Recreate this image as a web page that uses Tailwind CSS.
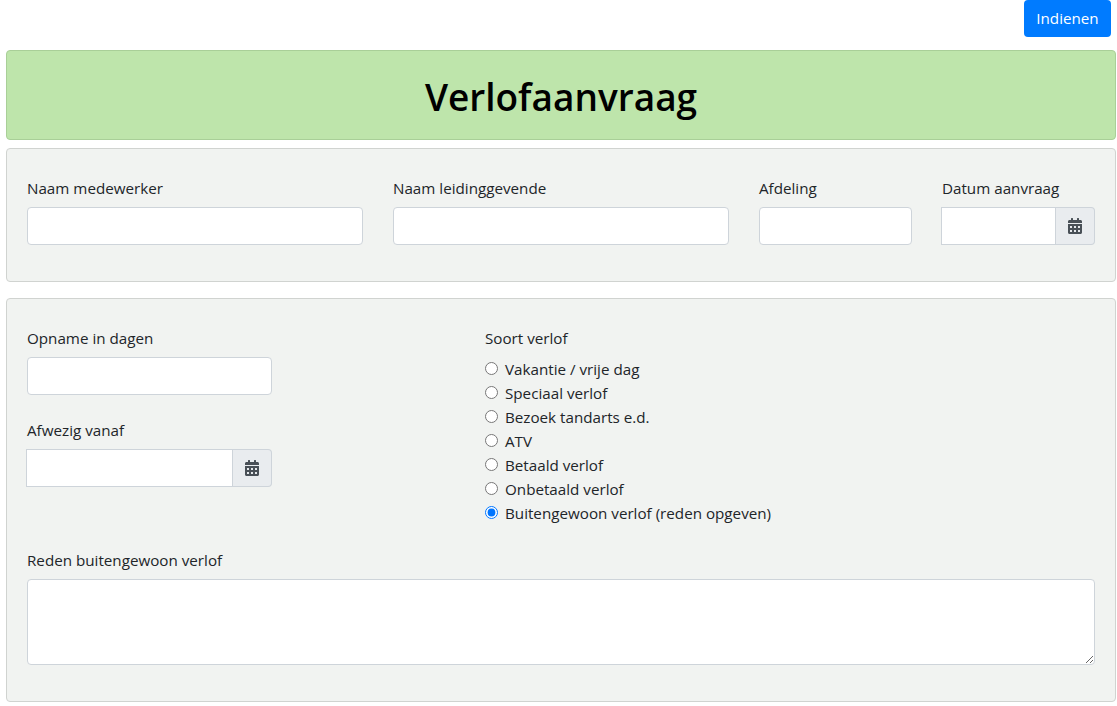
<!DOCTYPE html>
<html lang="nl"><head><meta charset="utf-8"><title>Verlofaanvraag</title>
<script src="https://cdn.jsdelivr.net/npm/@tailwindcss/browser@4"></script></head>
<body class="bg-white text-[#212529] font-['Open_Sans','Noto_Sans',sans-serif] text-[15.2px] leading-[24px] overflow-hidden h-[706px]">
<div class="flex justify-end pr-[6px] h-[37px] items-end"><button class="w-[87px] h-[37px] pb-[2px] bg-[#007bff] text-white rounded-[4px] text-[15.2px]">Indienen</button></div>
<div class="ml-[6px] mr-[1px] mt-[13px] h-[90px] bg-[#bee5ab] border border-[#a9cf98] rounded-[4px] flex items-center justify-center pt-[4px]"><h1 class="text-[37px] font-semibold text-black">Verlofaanvraag</h1></div>
<div class="ml-[6px] mr-[1px] mt-[8px] h-[134px] bg-[#f1f3f1] border border-[#d0d3d0] rounded-[4px] px-[20px] pt-[27px] flex">
<div class="w-[336px] shrink-0"><label class="block h-[31px]">Naam medewerker</label><input class="block w-full h-[38px] bg-white border border-[#ced4da] rounded-[4px]"></div>
<div class="w-[336px] shrink-0 ml-[30px]"><label class="block h-[31px]">Naam leidinggevende</label><input class="block w-full h-[38px] bg-white border border-[#ced4da] rounded-[4px]"></div>
<div class="w-[153px] shrink-0 ml-[30px]"><label class="block h-[31px]">Afdeling</label><input class="block w-full h-[38px] bg-white border border-[#ced4da] rounded-[4px]"></div>
<div class="w-[154px] shrink-0 ml-[29px]"><label class="block h-[31px] pl-[1px]">Datum aanvraag</label><div class="flex h-[38px]"><input class="min-w-0 flex-1 bg-white border border-[#ced4da]"><span class="w-[39px] shrink-0 bg-[#e9ecef] border border-l-0 border-[#ced4da] rounded-r-[4px] flex items-center justify-center"><svg viewBox="0 0 448 512" class="w-[14px] h-[16px]" fill="#495057"><path d="M0 464c0 26.500 21.500 48 48 48h352c26.500 0 48-21.500 48-48V192H0v272zm320-196c0-6.600 5.400-12 12-12h40c6.600 0 12 5.400 12 12v40c0 6.600-5.400 12-12 12h-40c-6.600 0-12-5.400-12-12v-40zm0 128c0-6.600 5.400-12 12-12h40c6.600 0 12 5.400 12 12v40c0 6.600-5.400 12-12 12h-40c-6.600 0-12-5.400-12-12v-40zM192 268c0-6.600 5.400-12 12-12h40c6.600 0 12 5.400 12 12v40c0 6.600-5.400 12-12 12h-40c-6.600 0-12-5.400-12-12v-40zm0 128c0-6.600 5.400-12 12-12h40c6.600 0 12 5.400 12 12v40c0 6.600-5.400 12-12 12h-40c-6.600 0-12-5.400-12-12v-40zM64 268c0-6.600 5.400-12 12-12h40c6.600 0 12 5.400 12 12v40c0 6.600-5.400 12-12 12H76c-6.600 0-12-5.400-12-12v-40zm0 128c0-6.600 5.400-12 12-12h40c6.600 0 12 5.400 12 12v40c0 6.600-5.400 12-12 12H76c-6.600 0-12-5.400-12-12v-40zM400 64h-48V16c0-8.800-7.200-16-16-16h-32c-8.800 0-16 7.200-16 16v48H160V16c0-8.800-7.200-16-16-16h-32c-8.800 0-16 7.200-16 16v48H48C21.500 64 0 85.500 0 112v48h448v-48c0-26.500-21.500-48-48-48z"/></svg></span></div></div>
</div>
<div class="ml-[6px] mr-[1px] mt-[16px] h-[404px] bg-[#f1f3f1] border border-[#d0d3d0] rounded-[4px] px-[20px] pt-[27px]">
<div class="flex h-[222px]"><div class="w-[245px] shrink-0"><label class="block h-[31px]">Opname in dagen</label><input class="block w-full h-[38px] bg-white border border-[#ced4da] rounded-[4px]"><label class="block h-[31px] mt-[23px]">Afwezig vanaf</label><div class="flex h-[38px] -ml-[1px]"><input class="min-w-0 flex-1 bg-white border border-[#ced4da]"><span class="w-[39px] shrink-0 bg-[#e9ecef] border border-l-0 border-[#ced4da] rounded-r-[4px] flex items-center justify-center"><svg viewBox="0 0 448 512" class="w-[14px] h-[16px]" fill="#495057"><path d="M0 464c0 26.500 21.500 48 48 48h352c26.500 0 48-21.500 48-48V192H0v272zm320-196c0-6.600 5.400-12 12-12h40c6.600 0 12 5.400 12 12v40c0 6.600-5.400 12-12 12h-40c-6.600 0-12-5.400-12-12v-40zm0 128c0-6.600 5.400-12 12-12h40c6.600 0 12 5.400 12 12v40c0 6.600-5.400 12-12 12h-40c-6.600 0-12-5.400-12-12v-40zM192 268c0-6.600 5.400-12 12-12h40c6.600 0 12 5.400 12 12v40c0 6.600-5.400 12-12 12h-40c-6.600 0-12-5.400-12-12v-40zm0 128c0-6.600 5.400-12 12-12h40c6.600 0 12 5.400 12 12v40c0 6.600-5.400 12-12 12h-40c-6.600 0-12-5.400-12-12v-40zM64 268c0-6.600 5.400-12 12-12h40c6.600 0 12 5.400 12 12v40c0 6.600-5.400 12-12 12H76c-6.600 0-12-5.400-12-12v-40zm0 128c0-6.600 5.400-12 12-12h40c6.600 0 12 5.400 12 12v40c0 6.600-5.400 12-12 12H76c-6.600 0-12-5.400-12-12v-40zM400 64h-48V16c0-8.800-7.200-16-16-16h-32c-8.800 0-16 7.200-16 16v48H160V16c0-8.800-7.200-16-16-16h-32c-8.800 0-16 7.200-16 16v48H48C21.500 64 0 85.500 0 112v48h448v-48c0-26.500-21.500-48-48-48z"/></svg></span></div></div>
<div class="ml-[213px]"><label class="block h-[31px]">Soort verlof</label>
<div class="flex flex-col">
<label class="flex items-center gap-[7px] h-[24px]"><input type="radio" name="s" class="w-[13px] h-[13px] m-0 -mt-[2px]">Vakantie / vrije dag</label>
<label class="flex items-center gap-[7px] h-[24px]"><input type="radio" name="s" class="w-[13px] h-[13px] m-0 -mt-[2px]">Speciaal verlof</label>
<label class="flex items-center gap-[7px] h-[24px]"><input type="radio" name="s" class="w-[13px] h-[13px] m-0 -mt-[2px]">Bezoek tandarts e.d.</label>
<label class="flex items-center gap-[7px] h-[24px]"><input type="radio" name="s" class="w-[13px] h-[13px] m-0 -mt-[2px]">ATV</label>
<label class="flex items-center gap-[7px] h-[24px]"><input type="radio" name="s" class="w-[13px] h-[13px] m-0 -mt-[2px]">Betaald verlof</label>
<label class="flex items-center gap-[7px] h-[24px]"><input type="radio" name="s" class="w-[13px] h-[13px] m-0 -mt-[2px]">Onbetaald verlof</label>
<label class="flex items-center gap-[7px] h-[24px]"><input type="radio" name="s" checked class="w-[13px] h-[13px] m-0 -mt-[2px]">Buitengewoon verlof (reden opgeven)</label>
</div></div></div>
<label class="block h-[20px]">Reden buitengewoon verlof</label>
<textarea class="block w-full h-[86px] mt-[11px] bg-white border border-[#ced4da] rounded-[4px]"></textarea>
</div>
</body></html>
